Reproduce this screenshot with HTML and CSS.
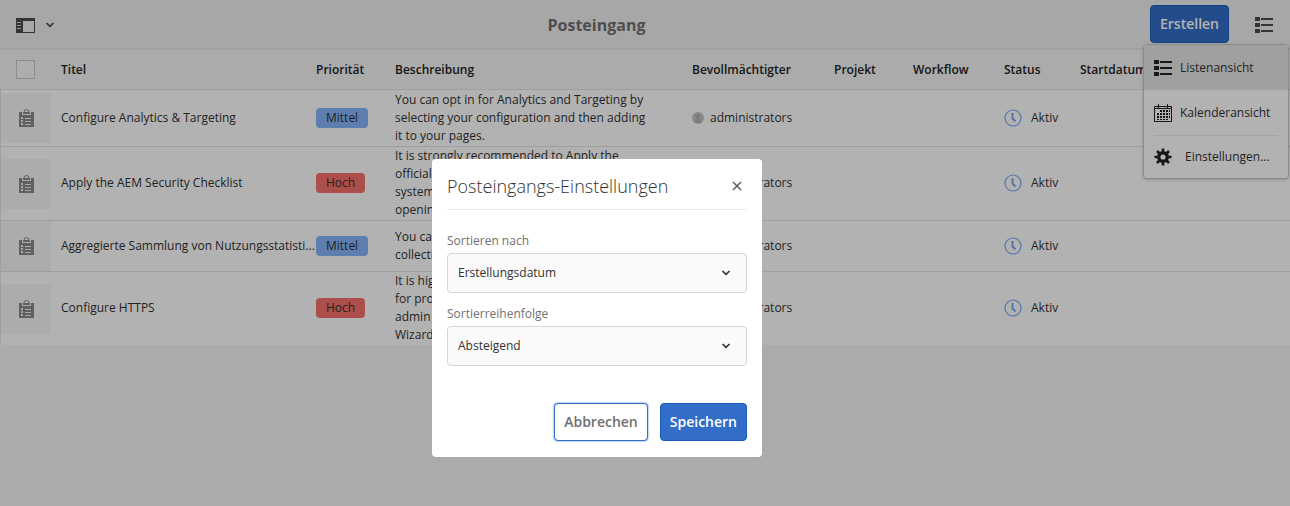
FILE: index.html
```html
<!DOCTYPE html>
<html lang="de">
<head>
<meta charset="utf-8">
<title>Posteingang</title>
<link rel="stylesheet" href="styles.css">
</head>
<body>
<svg class="sprite" aria-hidden="true">
  <symbol id="i-task" viewBox="0 0 15 18"><path d="M0 3h3v3h9V3h3v15H0z"/><path d="M4 3h7v2H4z"/><path d="M5 3a2.500 2.500 0 0 1 5 0" fill="none" stroke="currentColor"/><path class="cut" d="M2 8h2v2H2zM2 11h2v2H2zM2 14h2v2H2zM6 9h6v1H6zM6 12h6v1H6zM6 15h6v1H6z"/></symbol>
  <symbol id="i-clock" viewBox="0 0 18 18"><circle cx="9" cy="9" r="8" fill="none" stroke="currentColor" stroke-width="1.200"/><path d="M8.500 4v5.500l3 3" fill="none" stroke="currentColor" stroke-width="2"/></symbol>
  <symbol id="i-list" viewBox="0 0 18 18"><path d="M0 1h5v4H0zM0 7h5v4H0zM0 13h5v4H0zM6 2h12v2H6zM6 8h12v2H6zM6 14h12v2H6z"/></symbol>
  <symbol id="i-user" viewBox="0 0 12 12"><circle cx="6" cy="6" r="6"/><path class="face" d="M6 2a2.200 2.200 0 0 1 2.200 2.500C8.200 6 7.500 6.500 7.300 7.500L9.500 9.500a5 5 0 0 1-7 0L4.700 7.500C4.500 6.500 3.800 6 3.800 4.500A2.200 2.200 0 0 1 6 2z"/></symbol>
  <symbol id="i-chevron" viewBox="0 0 10 6"><path d="M1.500 1L5 4.300 8.500 1" fill="none" stroke="currentColor" stroke-width="1.700"/></symbol>
</svg>

<header class="bar">
  <button class="rail" type="button" aria-label="Seitenleiste">
    <svg class="rail-icon" viewBox="0 0 19 15"><path d="M0 0h19v15H0zM7 3v11h11V3z" fill-rule="evenodd"/><path class="rail-line" d="M1 4h4v1H1zM1 7h4v1H1zM1 10h4v1H1z"/></svg>
    <svg class="chevron"><use href="#i-chevron"/></svg>
  </button>
  <h1 class="bar-title">Posteingang</h1>
  <div class="actions">
    <button class="btn btn-primary" type="button">Erstellen</button>
    <button class="view" type="button" aria-label="Ansicht wechseln"><svg class="icon18"><use href="#i-list"/></svg></button>
    <div class="menu" role="menu">
      <button class="menu-item is-active" type="button" role="menuitem"><svg class="icon18"><use href="#i-list"/></svg>Listenansicht</button>
      <button class="menu-item" type="button" role="menuitem"><svg class="icon18" viewBox="0 0 18 18"><path d="M.500 2.500h17v15H.500zM.500 4.500h17M4.500 0v4M13.500 0v4" fill="none" stroke="currentColor"/><path d="M6 6h2v2H6zM9 6h2v2H9zM12 6h2v2h-2zM3 9h2v2H3zM6 9h2v2H6zM9 9h2v2H9zM12 9h2v2h-2zM3 12h2v2H3zM6 12h2v2H6zM9 12h2v2H9zM12 12h2v2h-2zM3 15h2v1H3zM6 15h2v1H6zM9 15h2v1H9zM12 15h2v1h-2zM15 6h1v2h-1zM15 9h1v2h-1zM15 12h1v2h-1z"/></svg>Kalenderansicht</button>
      <hr class="menu-line">
      <button class="menu-item menu-settings" type="button" role="menuitem"><svg class="icon18" viewBox="0 0 18 18"><circle cx="9" cy="9" r="4.300" fill="none" stroke="currentColor" stroke-width="3.400"/><path d="M9 .500v4M9 13.500v4M.500 9h4M13.500 9h4M3 3l3 3M12 12l3 3M3 15l3-3M12 6l3-3" stroke="currentColor" stroke-width="2.600"/></svg>Einstellungen...</button>
    </div>
  </div>
</header>

<table class="inbox">
  <colgroup><col class="c-icon"><col class="c-title"><col class="c-prio"><col class="c-desc"><col class="c-user"><col class="c-project"><col class="c-flow"><col class="c-status"><col></colgroup>
  <thead>
    <tr><th class="pick"><input class="check" type="checkbox" aria-label="Alle auswählen"></th><th>Titel</th><th>Priorität</th><th>Beschreibung</th><th>Bevollmächtigter</th><th>Projekt</th><th>Workflow</th><th>Status</th><th>Startdatum</th></tr>
  </thead>
  <tbody>
    <tr>
      <td class="thumb"><div class="tile"><svg class="task"><use href="#i-task"/></svg></div></td>
      <td class="name">Configure Analytics &amp; Targeting</td>
      <td><span class="tag tag-medium">Mittel</span></td>
      <td class="desc">You can opt in for Analytics and Targeting by<br>selecting your configuration and then adding<br>it to your pages.</td>
      <td><span class="user"><svg class="avatar"><use href="#i-user"/></svg>administrators</span></td>
      <td></td><td></td>
      <td><span class="status"><svg class="icon18"><use href="#i-clock"/></svg>Aktiv</span></td><td></td>
    </tr>
    <tr>
      <td class="thumb"><div class="tile"><svg class="task"><use href="#i-task"/></svg></div></td>
      <td class="name">Apply the AEM Security Checklist</td>
      <td><span class="tag tag-high">Hoch</span></td>
      <td class="desc">It is strongly recommended to Apply the<br>official<br>system<br>opening</td>
      <td><span class="user"><svg class="avatar"><use href="#i-user"/></svg>administrators</span></td>
      <td></td><td></td>
      <td><span class="status"><svg class="icon18"><use href="#i-clock"/></svg>Aktiv</span></td><td></td>
    </tr>
    <tr>
      <td class="thumb"><div class="tile"><svg class="task"><use href="#i-task"/></svg></div></td>
      <td class="name">Aggregierte Sammlung von Nutzungsstatisti...</td>
      <td><span class="tag tag-medium">Mittel</span></td>
      <td class="desc">You can<br>collection</td>
      <td><span class="user"><svg class="avatar"><use href="#i-user"/></svg>administrators</span></td>
      <td></td><td></td>
      <td><span class="status"><svg class="icon18"><use href="#i-clock"/></svg>Aktiv</span></td><td></td>
    </tr>
    <tr>
      <td class="thumb"><div class="tile"><svg class="task"><use href="#i-task"/></svg></div></td>
      <td class="name">Configure HTTPS</td>
      <td><span class="tag tag-high">Hoch</span></td>
      <td class="desc">It is highly<br>for production<br>admin<br>Wizard.</td>
      <td><span class="user"><svg class="avatar"><use href="#i-user"/></svg>administrators</span></td>
      <td></td><td></td>
      <td><span class="status"><svg class="icon18"><use href="#i-clock"/></svg>Aktiv</span></td><td></td>
    </tr>
  </tbody>
</table>

<div class="backdrop"></div>
<section class="dialog" role="dialog" aria-labelledby="dialog-title">
  <header class="dialog-head">
    <h2 class="dialog-title" id="dialog-title">Posteingangs-Einstellungen</h2>
    <button class="close" type="button" aria-label="Schließen"><svg class="close-icon" viewBox="0 0 10 10"><path d="M1 1l8 8M9 1L1 9" stroke="currentColor" stroke-width="1.500"/></svg></button>
  </header>
  <form class="form">
    <label class="label" for="sort-by">Sortieren nach</label>
    <div class="field"><select class="select" id="sort-by"><option>Erstellungsdatum</option></select><svg class="chevron field-chevron"><use href="#i-chevron"/></svg></div>
    <label class="label" for="sort-order">Sortierreihenfolge</label>
    <div class="field"><select class="select" id="sort-order"><option>Absteigend</option></select><svg class="chevron field-chevron"><use href="#i-chevron"/></svg></div>
    <div class="buttons">
      <button class="btn btn-secondary" type="button">Abbrechen</button>
      <button class="btn btn-primary" type="button">Speichern</button>
    </div>
  </form>
</section>
</body>
</html>
```
FILE: styles.css
```css
* { box-sizing: border-box; }
body {
  margin: 0;
  min-height: 100vh;
  overflow-x: hidden;
  background: #f5f5f5;
  color: #323232;
  font: 12px/18px "Open Sans", "Noto Sans", sans-serif;
}
button, select { font: inherit; color: inherit; }
button { padding: 0; border: 0; background: none; cursor: pointer; }
svg { display: block; flex: none; fill: currentColor; }
.sprite { display: none; }
.icon18 { width: 18px; height: 18px; }
.chevron { width: 10px; height: 6px; }

.bar {
  display: flex;
  align-items: center;
  height: 50px;
  padding: 0 17px 0 16px;
  border-bottom: 2px solid #e6e6e6;
  background: #f0f0f0;
}
.rail { display: flex; align-items: center; gap: 10px; padding-top: 2px; color: #4b4b4b; }
.rail-icon { width: 19px; height: 15px; }
.rail-line { fill: #d0d0d0; }
.bar-title {
  flex: 1;
  margin: 0;
  padding: 2px 12px 0 0;
  text-align: center;
  color: #707070;
  font-size: 16px;
  font-weight: 700;
}
.actions { position: relative; display: flex; align-items: center; gap: 26px; }
.view { padding-top: 2px; color: #4b4b4b; }
.btn {
  height: 38px;
  padding: 0 9px;
  border: 1px solid;
  border-radius: 4px;
  font-size: 14px;
  font-weight: 600;
}
.btn-primary { border-color: #1c5cc0; background: #326ec8; color: #fff; }
.btn-secondary { border-color: #326ec8; background: #fff; color: #707070; box-shadow: 0 0 2px #326ec8; }

.menu {
  position: absolute;
  top: 39px;
  right: -16px;
  width: 146px;
  border: 1px solid #c8c8c8;
  border-radius: 4px;
  background: #fff;
  box-shadow: 0 1px 3px #0003;
}
.menu-item {
  display: flex;
  align-items: center;
  gap: 8px;
  width: 100%;
  height: 45px;
  padding-left: 10px;
}
.menu-item .icon18 { color: #222; }
.menu-item.is-active { background: #e6e6e6; }
.menu-settings { height: 42px; gap: 13px; }
.menu-line { height: 1px; margin: 0 10px; border: 0; background: #eaeaea; }

.inbox { width: 100%; table-layout: fixed; border-collapse: separate; border-spacing: 0; }
.c-icon { width: 56px; }
.c-title { width: 255px; }
.c-prio { width: 79px; }
.c-desc { width: 297px; }
.c-user { width: 142px; }
.c-project { width: 79px; }
.c-flow { width: 91px; }
.c-status { width: 76px; }
.inbox th { height: 39px; padding: 0 0 0 5px; text-align: left; white-space: nowrap; color: #222; font-weight: 600; }
.inbox th.pick { padding-left: 16px; }
.inbox td { padding: 0 0 1px 5px; border-top: 1px solid #e4e4e4; background: #fff; }
.inbox tbody tr { height: 51px; }
.inbox tbody tr:first-child { height: 57px; }
.inbox td.thumb { padding: 0; border-left: 1px solid #e4e4e4; }
.name, .desc { white-space: nowrap; }
.check { display: block; appearance: none; width: 19px; height: 19px; margin: 0; border: 1px solid #cacaca; background: #f8f8f8; }
.tile { display: flex; align-items: center; justify-content: center; width: 50px; height: 50px; background: #f7f7f7; }
.task { width: 15px; height: 18px; color: #8a8a8a; }
.cut { fill: #f0f0f0; }
.tag { display: block; width: max-content; height: 20px; padding: 0 10px; border-radius: 4px; line-height: 20px; }
.tag-medium { background: #84b7fb; }
.tag-high { background: #f6716b; }
.user { display: flex; align-items: center; gap: 6px; }
.avatar { width: 12px; height: 12px; color: #c4c4c4; }
.face { fill: #b0b0b0; }
.status { display: flex; align-items: center; gap: 9px; }
.status .icon18 { color: #78a9f5; }

.backdrop { position: fixed; inset: 0; background: rgba(0, 0, 0, .3); }
.dialog {
  position: absolute;
  top: 159px;
  left: calc(50% - 213px);
  width: 330px;
  padding: 0 15px 16px;
  border-radius: 4px;
  background: #fff;
}
.dialog-head { display: flex; align-items: center; justify-content: space-between; height: 51px; padding-top: 3px; border-bottom: 1px solid #ececec; }
.dialog-title { margin: 0; font-size: 18px; font-weight: 300; }
.close { padding: 5px; color: #5a5a5a; }
.close-icon { width: 10px; height: 10px; }
.form { padding-top: 22px; }
.label { display: block; margin-bottom: 3px; color: #707070; }
.field { position: relative; margin-bottom: 12px; }
.select { display: block; appearance: none; width: 100%; height: 40px; padding: 0 10px; border: 1px solid #d6d6d6; border-radius: 4px; background: #fafafa; }
.field-chevron { position: absolute; top: 17px; right: 16px; pointer-events: none; }
.buttons { display: flex; justify-content: flex-end; gap: 12px; padding-top: 25px; }
```
